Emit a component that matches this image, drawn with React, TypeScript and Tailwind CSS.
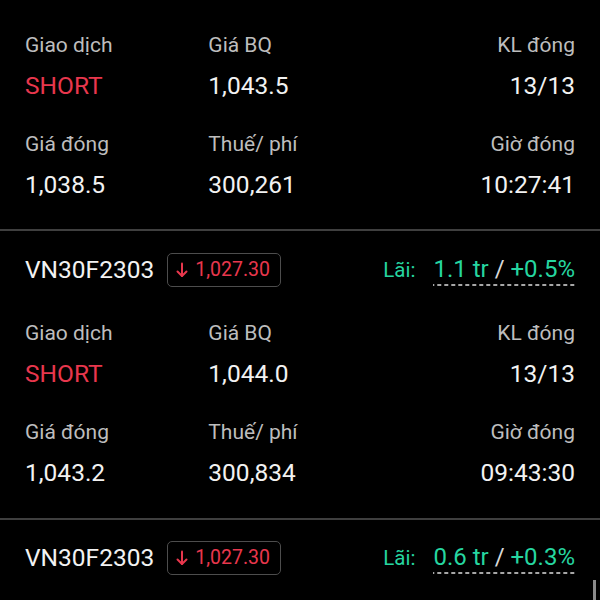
import React from 'react';

type Trade = {
  side: string;
  avg: string;
  qty: string;
  close: string;
  fee: string;
  time: string;
};

type Header = {
  symbol: string;
  price: string;
  pnl: string;
  pct: string;
};

const trades: { header?: Header; trade: Trade }[] = [
  {
    trade: { side: 'SHORT', avg: '1,043.5', qty: '13/13', close: '1,038.5', fee: '300,261', time: '10:27:41' },
  },
  {
    header: { symbol: 'VN30F2303', price: '1,027.30', pnl: '1.1 tr', pct: '+0.5%' },
    trade: { side: 'SHORT', avg: '1,044.0', qty: '13/13', close: '1,043.2', fee: '300,834', time: '09:43:30' },
  },
];

function Cell({ label, value, align, valueClass }: { label: string; value: string; align?: 'right'; valueClass?: string }) {
  return (
    <div className={align === 'right' ? 'text-right' : undefined}>
      <div className="h-[30px] text-[21px] leading-[30px] text-[#bdbdbd]">{label}</div>
      <div className={`mt-[11px] h-[30px] text-[24.5px] leading-[30px] ${valueClass ?? 'text-[#f2f2f2]'}`}>{value}</div>
    </div>
  );
}

function TradeGrid({ t }: { t: Trade }) {
  return (
    <div className="grid grid-cols-3 gap-y-[28px] px-[25px]">
      <Cell label="Giao dịch" value={t.side} valueClass="text-[#e8374d]" />
      <Cell label="Giá BQ" value={t.avg} />
      <Cell label="KL đóng" value={t.qty} align="right" />
      <Cell label="Giá đóng" value={t.close} />
      <Cell label="Thuế/ phí" value={t.fee} />
      <Cell label="Giờ đóng" value={t.time} align="right" />
    </div>
  );
}

function SymbolHeader({ h }: { h: Header }) {
  return (
    <div className="flex h-[34px] items-center justify-between px-[25px]">
      <div className="flex items-center">
        <span className="text-[24.5px] text-[#f2f2f2]">{h.symbol}</span>
        <span className="ml-[13px] flex h-[34px] items-center gap-[7px] rounded-[5px] border border-[#4d4d4d] pl-[8px] pr-[10px] text-[19.5px] text-[#e8374d]">
          <svg width="12" height="16" viewBox="0 0 12 16" fill="none" stroke="currentColor" strokeWidth="2" strokeLinecap="round" strokeLinejoin="round">
            <path d="M6 1.5v12.5" />
            <path d="M1.5 9.5 6 14l4.5-4.5" />
          </svg>
          {h.price}
        </span>
      </div>
      <div className="flex items-center text-[#26d6a0]">
        <span className="text-[20.5px]">Lãi:</span>
        <span className="ml-[18px] bg-[linear-gradient(to_right,#a6a6a6_4px,transparent_4px)] bg-[length:7px_2px] bg-bottom bg-repeat-x pb-[3px] text-[24px] leading-[28px]">
          {h.pnl}
          <span className="text-[#d9d9d9]"> / </span>
          {h.pct}
        </span>
      </div>
    </div>
  );
}

export default function App() {
  return (
    <div className="relative h-[600px] w-[600px] overflow-hidden bg-black pt-[30px] font-['Roboto','Liberation_Sans',sans-serif]">
      <TradeGrid t={trades[0].trade} />
      <div className="mt-[29px] h-[2px] bg-[#3f3f3f]" />
      <div className="pt-[22px]">
        <SymbolHeader h={trades[1].header!} />
      </div>
      <div className="pt-[31px]">
        <TradeGrid t={trades[1].trade} />
      </div>
      <div className="mt-[30px] h-[2px] bg-[#3f3f3f]" />
      <div className="pt-[21px]">
        <SymbolHeader h={{ symbol: 'VN30F2303', price: '1,027.30', pnl: '0.6 tr', pct: '+0.3%' }} />
      </div>
      <div className="absolute bottom-0 right-[4px] h-[20px] w-[3px] bg-[#8a8a8a]" />
    </div>
  );
}
